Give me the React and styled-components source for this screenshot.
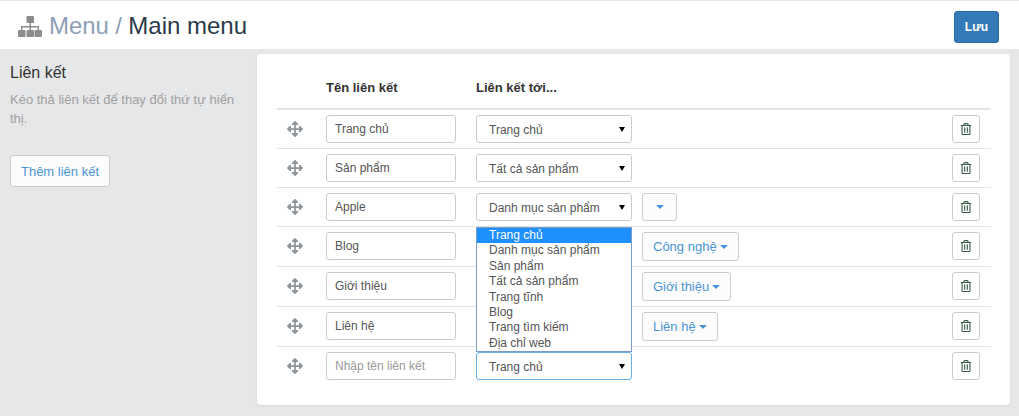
import React from "react";
import styled, { createGlobalStyle } from "styled-components";
import { FaArrowsAlt, FaRegTrashAlt } from "react-icons/fa";

const GlobalStyle = createGlobalStyle`
  html, body {
    margin: 0;
    padding: 0;
    background: #e6e7e9;
  }
  * {
    box-sizing: border-box;
  }
  body {
    font-family: "Liberation Sans", Arial, sans-serif;
    font-size: 13px;
    color: #555;
  }
`;

const Page = styled.div`
  width: 1019px;
  height: 416px;
  overflow: hidden;
  background: #e6e7e9;
`;

const Header = styled.header`
  height: 48px;
  margin-top: 1px;
  background: #fff;
  display: flex;
  align-items: center;
  justify-content: space-between;
  padding: 0 20px 0 18px;
`;

const Title = styled.h1`
  margin: 2px 0 0;
  font-size: 24px;
  font-weight: 400;
  color: #2b3a4a;
  display: flex;
  align-items: center;
`;

const TitleIcon = styled.svg`
  width: 24px;
  height: 21px;
  margin-right: 7px;
  fill: #8c8c8c;
`;

const Crumb = styled.span`
  color: #8d9fb5;
  white-space: pre;
  letter-spacing: -0.1px;
`;

const SaveButton = styled.button`
  width: 45px;
  height: 32px;
  margin-top: 4px;
  border: 1px solid #2e6da4;
  border-radius: 3px;
  background: #337ab7;
  color: #fff;
  font: 700 12px "Liberation Sans", Arial, sans-serif;
`;

const Body = styled.div`
  display: flex;
  padding-top: 5px;
`;

const Sidebar = styled.aside`
  width: 257px;
  padding: 10px 10px 0;
`;

const SideTitle = styled.h2`
  margin: 0;
  font-size: 16px;
  line-height: 18px;
  font-weight: 400;
  color: #333;
`;

const SideText = styled.p`
  margin: 8px 0 0;
  font-size: 13px;
  line-height: 19px;
  color: #a0a0a0;
`;

const AddButton = styled.button`
  display: block;
  margin-top: 27px;
  width: 100px;
  height: 32px;
  border: 1px solid #ccc;
  border-radius: 3px;
  background: #fcfcfc;
  color: #4a94d4;
  font: 400 13px "Liberation Sans", Arial, sans-serif;
`;

const Card = styled.main`
  width: 753px;
  height: 351px;
  background: #fff;
  border-radius: 4px;
  box-shadow: 0 1px 2px rgba(0, 0, 0, 0.08);
  padding: 0 19px 0 20px;
  position: relative;
`;

const HeadRow = styled.div`
  height: 56px;
  border-bottom: 2px solid #e4e4e4;
  display: flex;
  align-items: center;
  padding: 18px 0 5px 49px;
  font-size: 13px;
  font-weight: 700;
  color: #333;
`;

const HeadName = styled.div`
  width: 150px;
`;

const Row = styled.div`
  display: flex;
  align-items: flex-start;
  padding: 5px 11px 5px 0;
  border-bottom: ${(p) => (p.$last ? "none" : "1px solid #e4e4e4")};
`;

const Handle = styled.div`
  width: 49px;
  height: 28px;
  display: flex;
  align-items: center;
  padding-left: 10px;
  color: #8e959b;
`;

const MoveIcon = styled(FaArrowsAlt)`
  width: 16px;
  height: 16px;
`;

const NameField = styled.div`
  width: 130px;
  height: 28px;
  margin-right: 20px;
  border: 1px solid #ccc;
  border-radius: 3px;
  padding: 0 9px 0 8px;
  display: flex;
  align-items: center;
  font-size: 12px;
  color: ${(p) => (p.$placeholder ? "#999" : "#555")};
`;

const SelectBox = styled.div`
  width: 156px;
  height: 28px;
  border: 1px solid ${(p) => (p.$focus ? "#66afe9" : "#ccc")};
  border-radius: 3px;
  padding: 1px 12px 0;
  display: flex;
  align-items: center;
  justify-content: space-between;
  font-size: 12px;
  color: #555;
`;

const SelectArrow = styled.span`
  width: 0;
  height: 0;
  margin-left: auto;
  margin-right: -6px;
  margin-top: -1px;
  border-left: 3.5px solid transparent;
  border-right: 3.5px solid transparent;
  border-top: 5px solid #000;
`;

const PickButton = styled.div`
  height: ${(p) => (p.$short ? "28px" : "29px")};
  margin-left: 10px;
  padding: 0 ${(p) => (p.$short ? "12px" : "10px")} 0 10px;
  border: 1px solid #ccc;
  border-radius: 3px;
  background: #fcfcfc;
  color: #4a94d4;
  display: flex;
  align-items: center;
  gap: 3px;
  font-size: 13px;
`;

const Caret = styled.span`
  width: 0;
  height: 0;
  border-left: 4px solid transparent;
  border-right: 4px solid transparent;
  border-top: 4px solid #4a94d4;
`;

const TrashButton = styled.div`
  width: 28px;
  height: 28px;
  margin-left: auto;
  border: 1px solid #ccc;
  border-radius: 3px;
  display: flex;
  align-items: center;
  justify-content: center;
  color: #3a5a4a;
`;

const Dropdown = styled.ul`
  position: absolute;
  left: 219px;
  top: 173px;
  width: 156px;
  margin: 0;
  padding: 0;
  list-style: none;
  background: #fff;
  border: 1px solid #7a9cc6;
  font-size: 12px;
  color: #555;
`;

const Option = styled.li`
  height: 15.4px;
  line-height: 15.4px;
  padding-left: 12px;
  background: ${(p) => (p.$active ? "#1e90ff" : "transparent")};
  color: ${(p) => (p.$active ? "#fff" : "#555")};
`;

// rows 4-6: the select sits under the open dropdown, so its value isn't visible
const rows = [
  { name: "Trang chủ", target: "Trang chủ" },
  { name: "Sản phẩm", target: "Tất cả sản phẩm" },
  { name: "Apple", target: "Danh mục sản phẩm", pick: "", short: true },
  { name: "Blog", target: "", pick: "Công nghệ" },
  { name: "Giới thiệu", target: "", pick: "Giới thiệu" },
  { name: "Liên hệ", target: "", pick: "Liên hệ" },
];

const options = [
  "Trang chủ",
  "Danh mục sản phẩm",
  "Sản phẩm",
  "Tất cả sản phẩm",
  "Trang tĩnh",
  "Blog",
  "Trang tìm kiếm",
  "Địa chỉ web",
];

export default function App() {
  return (
    <Page>
      <GlobalStyle />
      <Header>
        <Title>
          <TitleIcon viewBox="0 0 24 21">
            <rect x="8.5" y="0" width="7.5" height="7" rx="1" />
            <rect x="0" y="14" width="7.5" height="7" rx="1" />
            <rect x="8.5" y="14" width="7.5" height="7" rx="1" />
            <rect x="16.5" y="14" width="7.5" height="7" rx="1" />
            <rect x="11.5" y="7" width="1.5" height="7" />
            <rect x="3" y="10" width="18" height="1.5" />
            <rect x="3" y="10" width="1.5" height="4" />
            <rect x="19.5" y="10" width="1.5" height="4" />
          </TitleIcon>
          <Crumb>Menu / </Crumb>Main menu
        </Title>
        <SaveButton>Lưu</SaveButton>
      </Header>
      <Body>
        <Sidebar>
          <SideTitle>Liên kết</SideTitle>
          <SideText>Kéo thả liên kết để thay đổi thứ tự hiển thị.</SideText>
          <AddButton>Thêm liên kết</AddButton>
        </Sidebar>
        <Card>
          <HeadRow>
            <HeadName>Tên liên kết</HeadName>
            <div>Liên kết tới...</div>
          </HeadRow>
          {rows.map((r) => (
            <Row key={r.name}>
              <Handle>
                <MoveIcon />
              </Handle>
              <NameField>{r.name}</NameField>
              <SelectBox>
                {r.target}
                <SelectArrow />
              </SelectBox>
              {r.pick !== undefined && (
                <PickButton $short={r.short}>
                  <span>{r.pick}</span>
                  <Caret />
                </PickButton>
              )}
              <TrashButton>
                <FaRegTrashAlt size={12} />
              </TrashButton>
            </Row>
          ))}
          <Row $last>
            <Handle>
              <MoveIcon />
            </Handle>
            <NameField $placeholder>Nhập tên liên kết</NameField>
            <SelectBox $focus>
              Trang chủ
              <SelectArrow />
            </SelectBox>
            <TrashButton>
              <FaRegTrashAlt size={12} />
            </TrashButton>
          </Row>
          <Dropdown>
            {options.map((o, i) => (
              <Option key={o} $active={i === 0}>
                {o}
              </Option>
            ))}
          </Dropdown>
        </Card>
      </Body>
    </Page>
  );
}
